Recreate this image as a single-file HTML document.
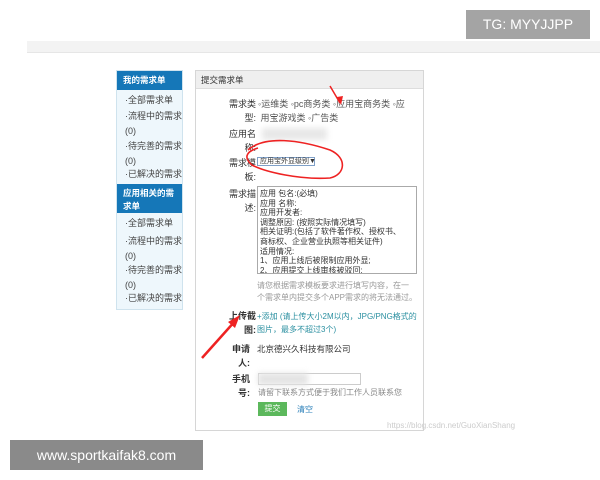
<!DOCTYPE html>
<html><head><meta charset="utf-8"><style>
*{margin:0;padding:0;box-sizing:border-box}
body{width:600px;height:480px;background:#fff;position:relative;overflow:hidden;font-family:"Liberation Sans","Noto Sans CJK SC",sans-serif;font-size:9px;color:#333}
.a{position:absolute;white-space:nowrap}
.side{position:absolute;left:116px;top:70px;width:67px;height:240px;background:#eef7fc;border:1px solid #cfe3ee}
.sh{position:absolute;left:0;width:65px;background:#1577b8;color:#fff;font-weight:bold;font-size:8.5px;padding:3px 6px;line-height:13px}
.si{position:absolute;left:8px;font-size:9px;color:#444;line-height:15px}
.lbl{position:absolute;font-size:9px;color:#333;text-align:right;line-height:14px}
</style></head><body>
<div class="a" style="left:466px;top:10px;width:124px;height:29px;background:#a4a4a4;color:#fff;font-size:14px;line-height:29px;text-align:center">TG: MYYJJPP</div>
<div class="a" style="left:27px;top:41px;width:573px;height:12px;background:#f3f3f3;border-bottom:1px solid #e6e6e6"></div>

<div class="side">
<div class="sh" style="top:0">我的需求单</div>
<div class="si" style="top:22px">·全部需求单</div>
<div class="si" style="top:38px">·流程中的需求<br>(0)</div>
<div class="si" style="top:68px">·待完善的需求<br>(0)</div>
<div class="si" style="top:96px">·已解决的需求</div>
<div class="sh" style="top:113px;height:29px">应用相关的需<br>求单</div>
<div class="si" style="top:145px">·全部需求单</div>
<div class="si" style="top:163px">·流程中的需求<br>(0)</div>
<div class="si" style="top:192px">·待完善的需求<br>(0)</div>
<div class="si" style="top:220px">·已解决的需求</div>
</div>

<div class="a" style="left:195px;top:70px;width:229px;height:361px;border:1px solid #d6d6d6;background:#fff"></div>
<div class="a" style="left:196px;top:71px;width:227px;height:18px;background:#efefef;border-bottom:1px solid #ddd;font-size:8.5px;line-height:18px;padding-left:5px">提交需求单</div>

<div class="lbl a" style="left:226px;top:97px;width:30px">需求类<br>型:</div>
<div class="a" style="left:258px;top:97px;font-size:9px;color:#555;line-height:14px">◦运维类 ◦pc商务类 ◦应用宝商务类 ◦应<br>&nbsp;用宝游戏类 ◦广告类</div>
<div class="lbl a" style="left:226px;top:127px;width:30px">应用名<br>称:</div>
<div class="a" style="left:262px;top:128px;width:65px;height:12px;background:#e8e8e8;filter:blur(3px)"></div>
<div class="lbl a" style="left:226px;top:156px;width:30px">需求模<br>板:</div>
<div class="a" style="left:257px;top:157px;width:58px;height:9px;border:1px solid #7fa0c8;font-size:7px;line-height:7px;padding-left:2px">应用宝外显级别▼</div>
<div class="lbl a" style="left:226px;top:187px;width:30px">需求描<br>述:</div>
<div class="a" style="left:257px;top:186px;width:160px;height:88px;border:1px solid #aaa;font-size:8px;line-height:9.6px;padding:2px;overflow:hidden">应用 包名:(必填)<br>应用 名称:<br>应用开发者:<br>调整原因: (按照实际情况填写)<br>相关证明:(包括了软件著作权、授权书、<br>商标权、企业营业执照等相关证件)<br>适用情况:<br>1、应用上线后被限制应用外显;<br>2、应用提交上线审核被驳回;</div>
<div class="a" style="left:257px;top:280px;font-size:8px;color:#999;line-height:12px">请您根据需求模板要求进行填写内容，在一<br>个需求单内提交多个APP需求的将无法通过。</div>
<div class="lbl a" style="left:226px;top:309px;width:30px;font-weight:bold">上传截<br>图:</div>
<div class="a" style="left:257px;top:310px;font-size:8px;color:#2a8fa0;line-height:13px">+添加 (请上传大小2M以内，JPG/PNG格式的<br>图片，最多不超过3个)</div>
<div class="lbl a" style="left:230px;top:342px;width:20px;font-weight:bold">申请<br>人:</div>
<div class="a" style="left:257px;top:343px;font-size:8.5px">北京德兴久科技有限公司</div>
<div class="lbl a" style="left:230px;top:372px;width:20px;font-weight:bold">手机<br>号:</div>
<div class="a" style="left:258px;top:373px;width:103px;height:12px;border:1px solid #ccc"></div>
<div class="a" style="left:258px;top:373px;width:50px;height:12px;background:#e4e4e4;filter:blur(3px)"></div>
<div class="a" style="left:258px;top:387px;font-size:8px;color:#888">请留下联系方式便于我们工作人员联系您</div>
<div class="a" style="left:258px;top:402px;width:29px;height:14px;background:#5cb85c;color:#fff;font-size:8px;line-height:14px;text-align:center">提交</div>
<div class="a" style="left:297px;top:404px;font-size:8px;color:#2a7fb8">清空</div>
<div class="a" style="left:387px;top:421px;font-size:8px;color:#ccc">https://blog.csdn.net/GuoXianShang</div>

<svg class="a" style="left:0;top:0" width="600" height="480">
<path d="M248 150 C265 135,300 140,330 150 C348 158,345 175,330 178 C300 180,265 172,252 165 C244 158,245 152,258 148" fill="none" stroke="#e22" stroke-width="1.6"/>
<path d="M330 86 L340 103" stroke="#e22" stroke-width="1.5"/><path d="M337 97 L341 105 L343 96Z" fill="#e22"/>
<path d="M202 358 L236 320" stroke="#e22" stroke-width="2.5"/><path d="M228 322 L240 315 L235 328Z" fill="#e22"/>
</svg>
<div class="a" style="left:10px;top:440px;width:193px;height:30px;background:#8a8a8a;color:#fff;font-size:14px;line-height:30px;text-align:center">www.sportkaifak8.com</div>
</body></html>
